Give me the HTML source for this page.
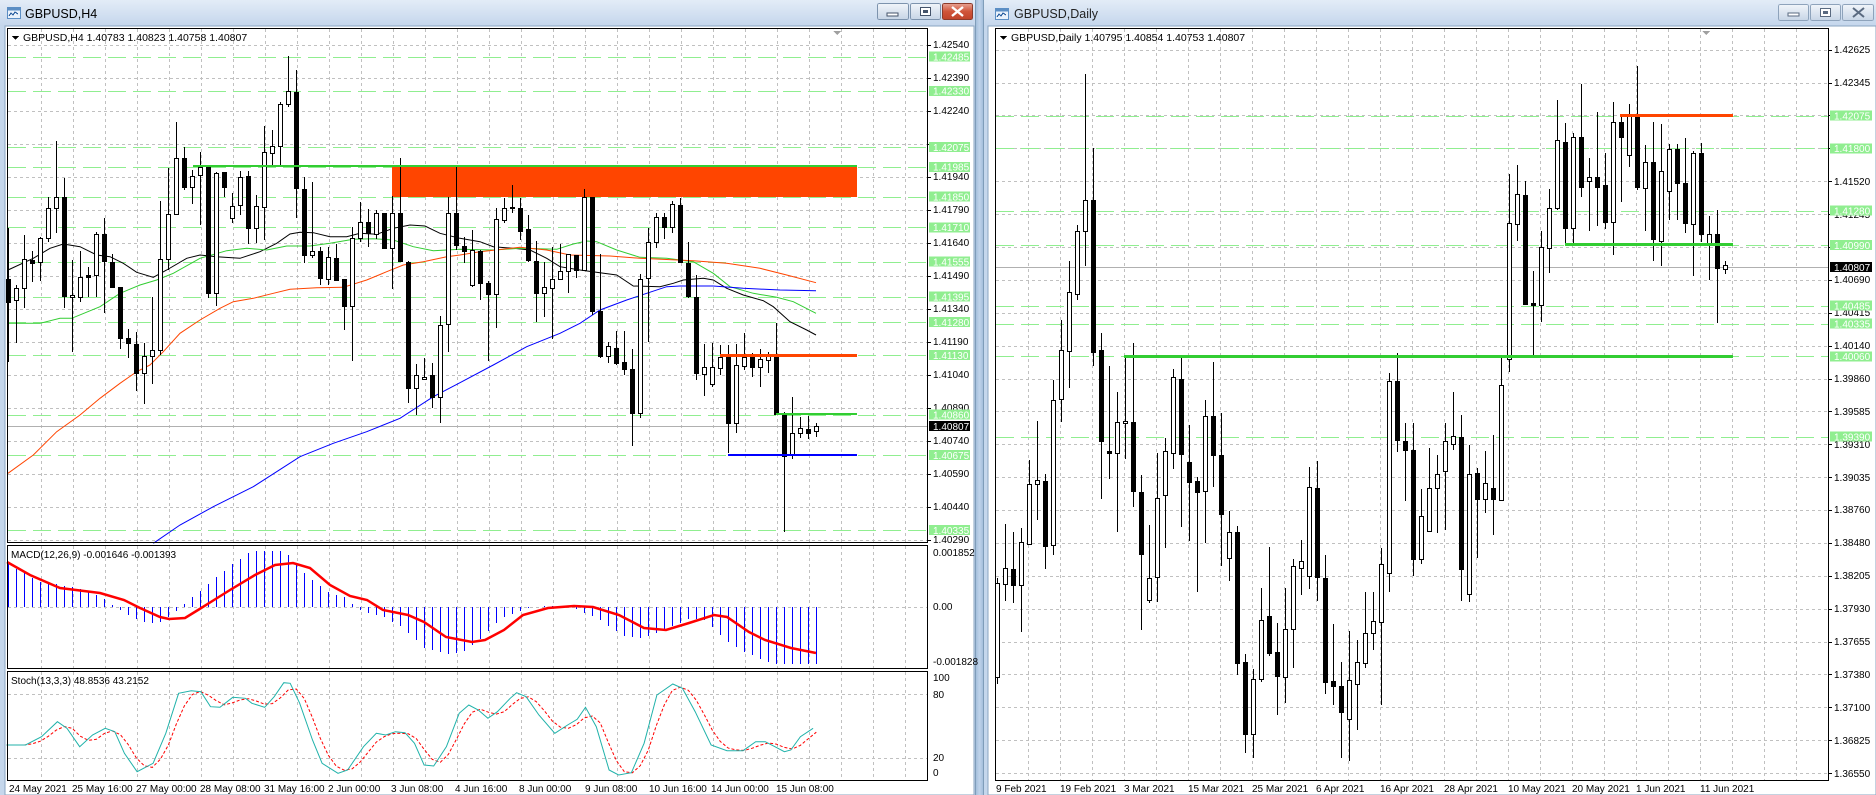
<!DOCTYPE html>
<html><head><meta charset="utf-8"><style>
html,body{margin:0;padding:0;background:#c5d7ec;overflow:hidden}
svg{display:block;font-family:"Liberation Sans",sans-serif}
</style></head><body>
<svg id="s" xmlns="http://www.w3.org/2000/svg" width="1876" height="795" viewBox="0 0 1876 795" shape-rendering="crispEdges">
<defs>
<linearGradient id="tb" x1="0" y1="0" x2="0" y2="1"><stop offset="0" stop-color="#e3ecf7"/><stop offset="1" stop-color="#c4d6ec"/></linearGradient>
<linearGradient id="bt" x1="0" y1="0" x2="0" y2="1"><stop offset="0" stop-color="#f1f5fa"/><stop offset="1" stop-color="#c7d5e6"/></linearGradient>
<linearGradient id="cl" x1="0" y1="0" x2="0" y2="1"><stop offset="0" stop-color="#e8a393"/><stop offset="0.5" stop-color="#d0553a"/><stop offset="1" stop-color="#c0432a"/></linearGradient>
<linearGradient id="gap" x1="0" y1="0" x2="1" y2="0"><stop offset="0" stop-color="#9db9d8"/><stop offset="0.5" stop-color="#bfd3ea"/><stop offset="1" stop-color="#9db9d8"/></linearGradient>
</defs>
<!-- chrome -->
<rect x="0" y="0" width="1876" height="795" fill="#c5d7ec"/>
<rect x="0" y="0" width="976" height="26" fill="url(#tb)"/>
<rect x="984" y="0" width="892" height="26" fill="url(#tb)"/>
<rect x="975" y="0" width="9" height="795" fill="url(#gap)"/>
<rect x="975" y="0" width="1" height="795" fill="#7f9db9"/>
<rect x="983" y="0" width="1" height="795" fill="#7f9db9"/>
<rect x="5" y="26" width="969" height="769" fill="#fff" stroke="#8aa5c2"/>
<rect x="988" y="26" width="888" height="769" fill="#fff" stroke="#8aa5c2"/>
<!-- title icons -->
<g>
<rect x="7.5" y="7.5" width="13" height="11" fill="#eaf2fb" stroke="#5b8ec4"/>
<rect x="7.5" y="7.5" width="13" height="3" fill="#5b8ec4"/>
<polyline points="9,16 11,13 13,15 15,12 18,14" fill="none" stroke="#2a5fa0"/>
<rect x="995.5" y="8.5" width="13" height="11" fill="#eaf2fb" stroke="#5b8ec4"/>
<rect x="995.5" y="8.5" width="13" height="3" fill="#5b8ec4"/>
<polyline points="997,17 999,14 1001,16 1003,13 1006,15" fill="none" stroke="#2a5fa0"/>
</g>
<text x="25" y="18" font-size="12.5" fill="#000">GBPUSD,H4</text>
<text x="1014" y="18" font-size="12.5" fill="#222">GBPUSD,Daily</text>
<!-- buttons left -->
<rect x="877.5" y="3.5" width="31" height="16" rx="2" fill="url(#bt)" stroke="#7d93ad"/>
<rect x="887" y="13" width="11" height="3" fill="#fff" stroke="#44536a" stroke-width="0.8"/>
<rect x="910.5" y="3.5" width="30" height="16" rx="2" fill="url(#bt)" stroke="#7d93ad"/>
<rect x="920.5" y="7.5" width="10" height="8" fill="#fff" stroke="#44536a"/>
<rect x="923" y="10" width="5" height="3" fill="#44536a"/>
<rect x="942.5" y="3.5" width="30" height="16" rx="2" fill="url(#cl)" stroke="#8c3b2b"/>
<path d="M952 7 L963 16 M963 7 L952 16" stroke="#fff" stroke-width="2.4" shape-rendering="auto"/>
<!-- buttons right -->
<rect x="1778.5" y="4.5" width="30" height="16" rx="2" fill="url(#bt)" stroke="#8ea3bb"/>
<rect x="1788" y="13" width="11" height="3" fill="#fff" stroke="#5a6a80" stroke-width="0.8"/>
<rect x="1810.5" y="4.5" width="30" height="16" rx="2" fill="url(#bt)" stroke="#8ea3bb"/>
<rect x="1820.5" y="8.5" width="10" height="8" fill="#fff" stroke="#5a6a80"/>
<rect x="1823" y="11" width="5" height="3" fill="#5a6a80"/>
<rect x="1842.5" y="4.5" width="31" height="16" rx="2" fill="url(#bt)" stroke="#8ea3bb"/>
<path d="M1853 8 L1864 17 M1864 8 L1853 17" stroke="#5a6a80" stroke-width="2" shape-rendering="auto"/>

<g id="grid"></g>
<g id="draw"></g>

<!-- borders -->
<g fill="none" stroke="#000">
<rect x="7.5" y="28.5" width="920" height="514"/>
<rect x="7.5" y="545.5" width="920" height="123"/>
<rect x="7.5" y="671.5" width="920" height="109"/>
<rect x="995.5" y="28.5" width="833" height="752"/>
</g>
<path d="M833 31 h8 l-4 4 z M1702 31 h8 l-4 4 z" fill="#a0a0a0"/>

<!-- headers -->
<path d="M12 36 h7 l-3.5 4 z M1000 36 h7 l-3.5 4 z" fill="#000"/>
<text x="23" y="41" font-size="10.5" fill="#000">GBPUSD,H4  1.40783 1.40823 1.40758 1.40807</text>
<text x="1011" y="41" font-size="10.5" fill="#000">GBPUSD,Daily  1.40795 1.40854 1.40753 1.40807</text>
<text x="11" y="558" font-size="10" fill="#000">MACD(12,26,9) -0.001646 -0.001393</text>
<text x="11" y="684" font-size="10" fill="#000">Stoch(13,3,3) 48.8536 43.2152</text>

<!-- left price axis -->
<g font-size="10" fill="#000">
<text x="933" y="48">1.42540</text>
<text x="933" y="81">1.42390</text>
<text x="933" y="114">1.42240</text>
<text x="933" y="180">1.41940</text>
<text x="933" y="213">1.41790</text>
<text x="933" y="246">1.41640</text>
<text x="933" y="279">1.41490</text>
<text x="933" y="312">1.41340</text>
<text x="933" y="345">1.41190</text>
<text x="933" y="378">1.41040</text>
<text x="933" y="411">1.40890</text>
<text x="933" y="444">1.40740</text>
<text x="933" y="477">1.40590</text>
<text x="933" y="510">1.40440</text>
<text x="933" y="543">1.40290</text>
<text x="933" y="556">0.001852</text>
<text x="933" y="610">0.00</text>
<text x="933" y="665">-0.001828</text>
<text x="933" y="681">100</text>
<text x="933" y="698">80</text>
<text x="933" y="761">20</text>
<text x="933" y="776">0</text>
</g>
<g id="lbl" font-size="10" fill="#fff">
<rect x="929" y="51.7" width="41" height="10" fill="#90ee90"/><text x="933" y="60.5">1.42485</text>
<rect x="929" y="85.8" width="41" height="10" fill="#90ee90"/><text x="933" y="94.5">1.42330</text>
<rect x="929" y="142" width="41" height="10" fill="#90ee90"/><text x="933" y="151">1.42075</text>
<rect x="929" y="161.8" width="41" height="10" fill="#90ee90"/><text x="933" y="170.5">1.41985</text>
<rect x="929" y="191.5" width="41" height="10" fill="#90ee90"/><text x="933" y="200.3">1.41850</text>
<rect x="929" y="222.3" width="41" height="10" fill="#90ee90"/><text x="933" y="231">1.41710</text>
<rect x="929" y="256.5" width="41" height="10" fill="#90ee90"/><text x="933" y="265.3">1.41555</text>
<rect x="929" y="291.7" width="41" height="10" fill="#90ee90"/><text x="933" y="300.5">1.41395</text>
<rect x="929" y="317" width="41" height="10" fill="#90ee90"/><text x="933" y="325.8">1.41280</text>
<rect x="929" y="350" width="41" height="10" fill="#90ee90"/><text x="933" y="358.8">1.41130</text>
<rect x="929" y="409.5" width="41" height="10" fill="#90ee90"/><text x="933" y="418.3">1.40860</text>
<rect x="929" y="450.2" width="41" height="10" fill="#90ee90"/><text x="933" y="459">1.40675</text>
<rect x="929" y="525" width="41" height="10" fill="#90ee90"/><text x="933" y="533.8">1.40335</text>
<rect x="929" y="421" width="41" height="10" fill="#000"/><text x="933" y="429.8">1.40807</text>
</g>

<!-- right price axis -->
<g font-size="10" fill="#000">
<text x="1834" y="53">1.42625</text>
<text x="1834" y="86">1.42345</text>
<text x="1834" y="185">1.41520</text>
<text x="1834" y="218">1.41245</text>
<text x="1834" y="283">1.40690</text>
<text x="1834" y="316">1.40415</text>
<text x="1834" y="349">1.40140</text>
<text x="1834" y="382">1.39860</text>
<text x="1834" y="415">1.39585</text>
<text x="1834" y="448">1.39310</text>
<text x="1834" y="481">1.39035</text>
<text x="1834" y="513">1.38760</text>
<text x="1834" y="546">1.38480</text>
<text x="1834" y="579">1.38205</text>
<text x="1834" y="612">1.37930</text>
<text x="1834" y="645">1.37655</text>
<text x="1834" y="678">1.37380</text>
<text x="1834" y="711">1.37100</text>
<text x="1834" y="744">1.36825</text>
<text x="1834" y="777">1.36550</text>
</g>
<g font-size="10" fill="#fff">
<rect x="1830" y="110.5" width="42" height="10" fill="#90ee90"/><text x="1834" y="119.3">1.42075</text>
<rect x="1830" y="143.3" width="42" height="10" fill="#90ee90"/><text x="1834" y="152">1.41800</text>
<rect x="1830" y="205.5" width="42" height="10" fill="#90ee90"/><text x="1834" y="214.3">1.41280</text>
<rect x="1830" y="240.2" width="42" height="10" fill="#90ee90"/><text x="1834" y="249">1.40990</text>
<rect x="1830" y="300.6" width="42" height="10" fill="#90ee90"/><text x="1834" y="309.4">1.40485</text>
<rect x="1830" y="318.5" width="42" height="10" fill="#90ee90"/><text x="1834" y="327.3">1.40335</text>
<rect x="1830" y="351.4" width="42" height="10" fill="#90ee90"/><text x="1834" y="360.2">1.40060</text>
<rect x="1830" y="431.5" width="42" height="10" fill="#90ee90"/><text x="1834" y="440.3">1.39390</text>
<rect x="1830" y="262" width="42" height="10" fill="#000"/><text x="1834" y="270.8">1.40807</text>
</g>

<!-- time axes -->
<g font-size="10" fill="#000">
<text x="9" y="792">24 May 2021</text>
<text x="72" y="792">25 May 16:00</text>
<text x="136" y="792">27 May 00:00</text>
<text x="200" y="792">28 May 08:00</text>
<text x="264" y="792">31 May 16:00</text>
<text x="328" y="792">2 Jun 00:00</text>
<text x="391" y="792">3 Jun 08:00</text>
<text x="455" y="792">4 Jun 16:00</text>
<text x="519" y="792">8 Jun 00:00</text>
<text x="585" y="792">9 Jun 08:00</text>
<text x="649" y="792">10 Jun 16:00</text>
<text x="711" y="792">14 Jun 00:00</text>
<text x="776" y="792">15 Jun 08:00</text>
<text x="996" y="792">9 Feb 2021</text>
<text x="1060" y="792">19 Feb 2021</text>
<text x="1124" y="792">3 Mar 2021</text>
<text x="1188" y="792">15 Mar 2021</text>
<text x="1252" y="792">25 Mar 2021</text>
<text x="1316" y="792">6 Apr 2021</text>
<text x="1380" y="792">16 Apr 2021</text>
<text x="1444" y="792">28 Apr 2021</text>
<text x="1508" y="792">10 May 2021</text>
<text x="1572" y="792">20 May 2021</text>
<text x="1636" y="792">1 Jun 2021</text>
<text x="1700" y="792">11 Jun 2021</text>
</g>
</svg>
<script>
(function(){
var NS='http://www.w3.org/2000/svg';
var G=document.getElementById('grid'),D=document.getElementById('draw');
function el(t,a,p){var e=document.createElementNS(NS,t);for(var k in a)e.setAttribute(k,a[k]);p.appendChild(e);return e;}
function hline(x1,x2,y,col,dash,w,p){el('line',{x1:x1,x2:x2,y1:y,y2:y,stroke:col,'stroke-width':w||1,'stroke-dasharray':dash||''},p||G);}
function vline(x,y1,y2,col,dash,p){el('line',{x1:x,x2:x,y1:y1,y2:y2,stroke:col,'stroke-dasharray':dash||''},p||G);}
var GR='#c0c0c0',GD='3,3',LG='#90ee90',LD='18,7';
// left grid
var k,x,y;
for(k=0;k<28;k++){x=Math.round(40.7+32*k)+0.5;vline(x,29,542,GR,GD);vline(x,546,668,GR,GD);vline(x,672,780,GR,GD);}
for(k=0;k<16;k++){y=Math.round(44.6+33.03*k)+0.5;hline(8,927,y,GR,GD);hline(927,931,y,'#000');}
hline(8,927,607.5,GR,GD);hline(8,927,694.5,GR,GD);hline(8,927,758.5,GR,GD);
[56.7,90.8,147,166.8,196.5,227.3,261.5,296.7,322,355,414.5,455.2,530].forEach(function(v){hline(8,927,Math.round(v)+0.5,LG,LD);});
hline(8,927,426.5,'#b0b0b0');
// right grid
for(k=0;k<25;k++){x=Math.round(1028.3+32*k)+0.5;vline(x,29,780,GR,GD);}
for(k=0;k<23;k++){y=Math.round(49.7+32.88*k)+0.5;hline(996,1828,y,GR,GD);hline(1828,1832,y,'#000');}
[115.5,148.3,210.5,245.2,305.6,323.5,356.4,436.5].forEach(function(v){hline(996,1828,Math.round(v)+0.5,LG,LD);});
hline(996,1828,267.5,'#b0b0b0');

function candle(cx,wt,wb,bt,bb,c){
  var c0=Math.round(cx);
  el('line',{x1:c0+0.5,x2:c0+0.5,y1:Math.round(wt),y2:Math.round(wb),stroke:'#000'},D);
  var t=Math.round(bt),b=Math.round(bb);if(b-t<1)b=t+1;
  if(c) el('rect',{x:c0-2,y:t,width:5,height:b-t+1,fill:'#000'},D);
  else el('rect',{x:c0-1.5,y:t+0.5,width:4,height:Math.max(b-t,1),fill:'#fff',stroke:'#000'},D);
}
function poly(pts,col,w,dash){el('polyline',{points:pts.map(function(p){return p[0].toFixed(1)+','+p[1].toFixed(1);}).join(' '),fill:'none',stroke:col,'stroke-width':w||1,'stroke-dasharray':dash||'','shape-rendering':'auto'},D);}

// left overlays first (rect under candles)
el('rect',{x:392,y:167,width:465,height:30,fill:'#ff4500'},D);

// left MAs
function cv(a,off){return a.map(function(p){return [(off+p[0])/3,40+p[1]/3];});}
poly(cv([[24,690],[100,655],[150,625],[190,612],[240,620],[290,645],[330,650],[370,670],[410,697],[460,712],[500,690],[560,655],[600,645],[650,650],[720,655],[780,635],[830,610],[870,582],[900,577],[940,578],[990,590],[1040,590],[1080,580],[1130,583],[1180,565],[1230,555],[1275,558],[1320,580],[1380,595]],0).concat(cv([[60,605],[100,620],[160,625],[210,630],[260,655],[300,680],[360,690],[420,698],[470,705],[520,738],[600,740],[640,730],[670,720],[730,715],[760,720],[800,745],[850,765],[910,782],[940,800],[990,845],[1040,870],[1068,885]],1380)),'#000',1);
poly(cv([[24,850],[120,850],[180,835],[215,835],[300,800],[360,760],[420,735],[470,720],[520,700],[600,655],[680,632],[740,625],[800,630],[860,618],[930,618],[990,610],[1060,598],[1120,596],[1180,600],[1240,620],[1300,632],[1380,628]],0).concat(cv([[100,630],[180,625],[290,628],[340,612],[380,603],[410,605],[470,630],[540,652],[620,655],[700,665],[760,700],[810,740],[880,760],[950,772],[1000,785],[1068,820]],1380)),'#32cd32',1);
poly(cv([[24,1300],[100,1245],[170,1175],[240,1125],[300,1075],[360,1030],[410,995],[450,975],[490,935],[540,880],[600,840],[660,805],[700,785],[760,775],[820,760],[870,748],[950,743],[1030,742],[1100,720],[1160,695],[1210,675],[1270,665],[1340,650],[1380,645]],0).concat(cv([[60,635],[180,622],[260,630],[330,645],[450,648],[540,655],[700,662],[800,670],[900,685],[980,705],[1068,728]],1380)),'#ff4500',1);
poly(cv([[460,1510],[540,1455],[640,1400],[760,1340],[900,1250],[1000,1210],[1100,1175],[1200,1135],[1300,1070],[1380,1028]],0).concat(cv([[100,975],[200,920],[300,880],[360,850],[420,810],[500,780],[560,760],[620,740],[660,738],[760,738],[850,745],[960,750],[1068,752]],1380)),'#0000ff',1);

// left candles
var L=[[565,965,718,785,1],[735,910,745,780,0],[585,805,658,745,0],[633,725,660,668,1],[590,722,595,665,0],[472,605,505,595,0],[302,580,470,505,0],[415,803,470,768,1],[660,935,765,772,0],[633,785,712,772,0],[682,772,706,710,1],[575,770,583,706,0],[535,820,583,662,1],[643,740,665,740,1],[740,928,742,895,1],[868,955,895,910,1],[875,1053,912,998,1],[910,1093,948,1000,0],[772,1033,930,948,0],[483,945,658,930,0],[385,690,522,658,0],[245,525,355,522,0],[322,450,355,440,1],[390,493,407,440,0],[337,555,382,405,0],[380,775,380,760,1],[395,797,398,760,0],[395,470,397,440,1],[460,550,498,535,0],[392,525,410,495,0],[392,612,408,565,1],[465,610,498,565,0],[258,600,337,500,0],[270,378,318,340,0],[185,375,193,318,0],[48,200,153,193,0],[90,535,157,445,1],[410,670,448,645,1],[425,655,632,645,0],[620,735,633,715,1],[620,735,652,718,0],[612,720,655,720,1],[717,870,718,797,1],[560,962,595,797,0],[485,605,545,595,0],[508,620,545,580,1],[510,598,520,582,0],[518,627,520,625,1],[468,748,518,625,0],[355,665,520,662,1],[662,1090,665,1045,1],[972,1125,1005,1045,0],[955,1020,1010,1017,0],[968,1105,1005,1070,1],[828,1150,855,1072,0],[470,935,518,852,0],[375,630,518,615,1],[592,668,618,632,1],
[570,740,630,735,0],[630,780,632,730,1],[722,962,730,762,1],[505,865,538,762,0],[475,548,505,540,0],[435,520,500,505,1],[475,600,505,572,1],[525,665,567,660,1],[603,845,662,758,1],[665,830,742,758,0],[620,898,718,745,0],[612,720,692,718,0],[642,758,643,692,0],[645,715,645,690,1],[448,692,470,690,0],[470,825,470,812,1],[642,955,812,948,1],[905,970,918,948,0],[873,975,925,968,1],[873,1005,965,988,1],[928,1218,988,1118,1],[702,1135,718,1118,0],[565,905,605,715,0],[520,625,532,605,0],[520,598,532,560,1],[482,580,492,560,0],[475,668,495,665,1],[605,775,668,768,1],[705,1020,772,1000,1],[912,1068,980,1002,0],[910,1040,982,1032,0],[915,1005,952,985,0],[915,1238,948,1148,1],[912,1178,975,1148,0],[880,990,952,978,0],[940,1012,952,982,1],[928,1040,958,982,0],[935,1000,948,960,0],[848,1125,948,1122,1],[1115,1475,1122,1248,1],[1070,1258,1180,1245,0],[1132,1195,1165,1180,0],[1128,1198,1168,1178,1],[1150,1192,1158,1172,0]];
var cxs=[];
L.forEach(function(d,i){var cx=8.3+8*i;cxs.push(cx);candle(cx,40+d[0]/3,40+d[1]/3,40+d[2]/3,40+d[3]/3,d[4]);});

// left level lines
el('rect',{x:193,y:165,width:664,height:2,fill:'#32cd32'},D);
el('rect',{x:720,y:354,width:137,height:3,fill:'#ff4500'},D);
el('rect',{x:776,y:413,width:81,height:2,fill:'#32cd32'},D);
el('rect',{x:728,y:454,width:129,height:2,fill:'#0000ff'},D);

// MACD
var S=[[7,562],[30,575],[60,588],[100,593],[124,600],[140,608],[160,617],[169,619],[185,618],[198,610],[214,600],[230,590],[255,575],[275,565],[293,563],[310,568],[330,585],[350,596],[367,600],[383,610],[408,615],[424,622],[446,637],[472,642],[485,640],[504,630],[523,615],[548,608],[574,606],[593,607],[619,615],[644,628],[666,630],[689,623],[714,615],[727,617],[749,632],[765,640],[791,648],[816,653]];
function interp(a,x){if(x<=a[0][0])return a[0][1];for(var i=1;i<a.length;i++){if(x<=a[i][0]){var t=(x-a[i-1][0])/(a[i][0]-a[i-1][0]);return a[i-1][1]+t*(a[i][1]-a[i-1][1]);}}return a[a.length-1][1];}
cxs.forEach(function(cx){var v=interp(S,cx+22);var h=607+(v-607)*1.35;h=Math.max(551,Math.min(664,h));var c0=Math.round(cx)+0.5;el('line',{x1:c0,x2:c0,y1:607,y2:Math.round(h),stroke:'#0000ff'},D);});
poly(S,'#ff0000',2.5);

// Stoch
var M=[[10,435],[40,435],[65,410],[90,365],[105,385],[125,440],[145,405],[165,385],[180,395],[195,460],[215,515],[240,490],[260,400],[280,280],[300,272],[315,275],[330,320],[345,322],[365,292],[385,295],[395,310],[415,322],[430,290],[445,248],[455,250],[470,310],[490,420],[505,490],[530,520],[545,510],[570,440],[590,400],[605,405],[620,395],[635,398],[650,430],[665,495],[680,498],[700,440],[720,340],[735,315],[750,330],[765,355],[780,335],[800,295],[810,278],[825,290],[845,345],[870,400],[890,375],[905,358],[918,322],[935,380],[955,510],[970,525],[990,518],[1010,430],[1030,285],[1055,252],[1070,265],[1090,335],[1115,435],[1140,452],[1165,452],[1185,425],[1200,425],[1215,440],[1230,455],[1240,450],[1255,410],[1275,385]].map(function(p){return [p[0]/1.568,600+p[1]/3];});
var ms=cxs.map(function(cx){return interp(M,cx);});
var sig=[];for(var i=0;i<ms.length;i++){var a=ms[Math.max(0,i-2)],b=ms[Math.max(0,i-1)];sig.push([cxs[i],(a+b+ms[i])/3]);}
poly(sig,'#ff0000',1,'3,2');
poly(M,'#20b2aa',1);

// right candles
var R9=[[1140,1365,1150,1350,0],[1025,1188,1118,1152,0],[1043,1192,1120,1155,1],[1035,1255,1063,1155,0],[890,1070,940,1068,0],[808,1018,933,940,0],[920,1120,935,1072,1],[720,1092,762,1070,0],[593,810,656,760,0],[468,737,533,658,0],[392,550,404,538,0],[73,478,338,404,0],[228,690,340,662,1],[620,972,656,850,1],[690,930,870,876,1],[745,1043,810,876,0],[668,888,808,812,0],[643,990,810,956,1],[922,1250,957,1090,1],[1028,1192,1140,1186,0],[876,1190,970,1138,0],[843,1077,870,965,0],[697,908,715,875,0],[673,1033,718,878,1],[815,1062,895,936,1],[925,1170,935,958,1],[762,1065,796,955,0],[683,947,796,880,1],[790,1115,880,1005,1],[997,1146,1043,1098,0],[1030,1345,1043,1320,1],[1302,1510,1318,1470,1],[1332,1522,1355,1470,0],[1162,1360,1228,1355,0],[1075,1305,1220,1298,1],[1235,1430,1297,1348,1],[1162,1405,1248,1350,0],[1100,1330,1115,1248,0],[1060,1175,1103,1118,0],[905,1163,948,1135,0],[892,1188,950,1138,1]];
var R7=[[1095,1368,1140,1345,1],[1230,1390,1343,1352,1],[1305,1495,1352,1405,1],[1245,1500,1340,1418,0],[1262,1440,1306,1348,0],[1168,1318,1248,1308,0],[1168,1282,1225,1248,0],[1080,1390,1112,1226,0],[735,1168,752,1130,0],[697,892,752,868,1],[835,988,870,888,1],[835,1135,888,1102,1],[965,1112,1017,1102,0],[884,1048,962,1048,0],[898,1052,934,962,0],[835,1045,870,928,0],[773,888,860,875,0],[818,1185,862,1122,1],[878,1188,934,1172,0],[922,1100,932,985,1],[890,1012,952,985,0],[858,1055,962,984,1],[705,988,760,986,0],[343,733,440,708,0],[325,475,382,442,0],[357,600,385,600,1],[535,700,598,602,1],[455,635,487,602,0],[372,538,410,490,0],[198,415,276,410,0],[242,480,281,450,1],[262,480,270,450,0],[165,388,270,368,1],[312,455,350,356,0],[220,445,350,368,1],[302,452,365,437,1],[202,502,240,438,0],[225,398,240,270,1],[205,330,228,305,0],[130,375,228,368,1],[285,455,320,370,0],[240,515,320,472,1],[245,525,338,476,0],[283,433,293,376,0],[283,433,293,360,1],[272,460,360,440,1],[298,545,302,442,0],[282,478,302,462,1],[425,552,462,480,0],[415,637,462,528,1],[515,540,522,530,0]];
var n=0;
R9.forEach(function(d){var cx=996.7+8*n++;candle(cx,40+d[0]/2.119,40+d[1]/2.119,40+d[2]/2.119,40+d[3]/2.119,d[4]);});
R7.forEach(function(d){var cx=996.7+8*n++;candle(cx,d[0]/1.972,d[1]/1.972,d[2]/1.972,d[3]/1.972,d[4]);});
el('rect',{x:1620,y:114,width:113,height:3,fill:'#ff4500'},D);
el('rect',{x:1565,y:243,width:168,height:3,fill:'#32cd32'},D);
el('rect',{x:1124,y:355,width:609,height:3,fill:'#32cd32'},D);
})();
</script>
</body></html>
